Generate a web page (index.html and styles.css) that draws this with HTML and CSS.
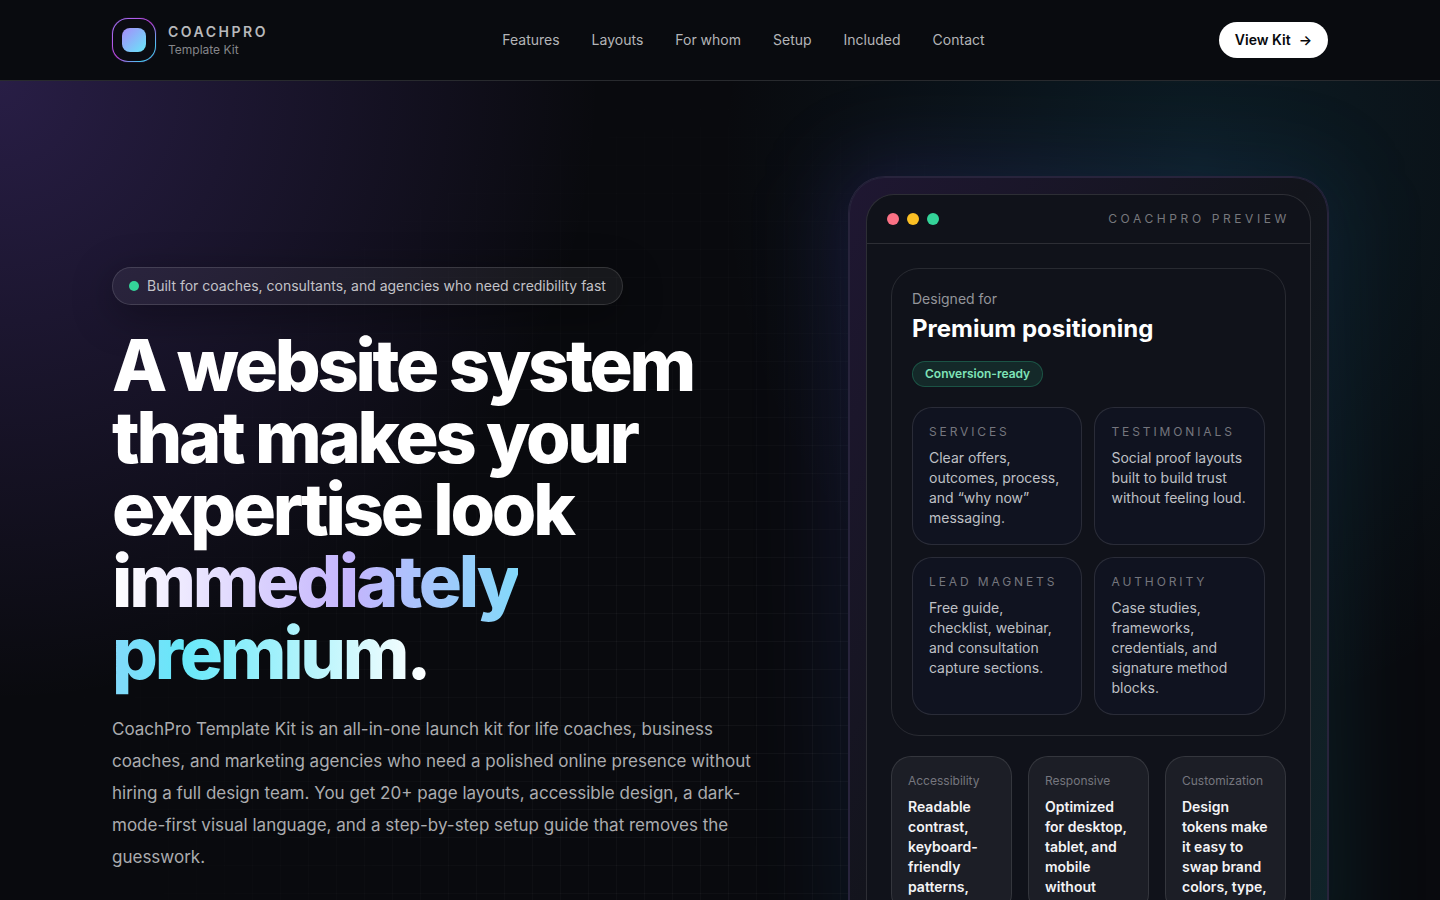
FILE: index.html
```html
<!DOCTYPE html>
<html lang="en">
<head>
  <meta charset="UTF-8">
  <meta name="viewport" content="width=device-width, initial-scale=1.0">
  <title>CoachPro Template Kit</title>
  <link rel="stylesheet" href="styles.css">
</head>
<body>
  <header class="site-header">
    <div class="container header-row">
      <a class="brand" href="#top">
        <span class="brand-mark"><span class="brand-core"></span></span>
        <span class="brand-text">
          <span class="brand-name">COACHPRO</span>
          <span class="brand-sub">Template Kit</span>
        </span>
      </a>
      <nav class="main-nav">
        <a href="#features">Features</a>
        <a href="#layouts">Layouts</a>
        <a href="#for-whom">For whom</a>
        <a href="#setup">Setup</a>
        <a href="#included">Included</a>
        <a href="#contact">Contact</a>
      </nav>
      <a class="btn-kit" href="#contact">View Kit <span>→</span></a>
    </div>
  </header>

  <main class="hero" id="top">
    <div class="hero-grid"></div>
    <div class="container hero-row">
      <!-- Intro -->
      <section class="intro">
        <p class="pill"><span class="pill-dot"></span>Built for coaches, consultants, and agencies who need credibility fast</p>
        <h1>A website system that makes your expertise look <span class="gradient-text">immediately premium.</span></h1>
        <p class="lead">CoachPro Template Kit is an all-in-one launch kit for life coaches, business coaches, and marketing agencies who need a polished online presence without hiring a full design team. You get 20+ page layouts, accessible design, a dark-mode-first visual language, and a step-by-step setup guide that removes the guesswork.</p>
      </section>

      <!-- Preview window -->
      <section class="preview">
        <div class="preview-glow"></div>
        <div class="shell">
          <div class="window">
            <div class="window-bar">
              <div class="dots">
                <span class="dot dot-red"></span>
                <span class="dot dot-yellow"></span>
                <span class="dot dot-green"></span>
              </div>
              <span class="window-title">COACHPRO PREVIEW</span>
            </div>
            <div class="window-body">
              <div class="panel">
                <p class="panel-label">Designed for</p>
                <h2>Premium positioning</h2>
                <span class="badge">Conversion-ready</span>
                <div class="tiles">
                  <div class="tile">
                    <h3>SERVICES</h3>
                    <p>Clear offers, outcomes, process, and “why now” messaging.</p>
                  </div>
                  <div class="tile">
                    <h3>TESTIMONIALS</h3>
                    <p>Social proof layouts built to build trust without feeling loud.</p>
                  </div>
                  <div class="tile">
                    <h3>LEAD MAGNETS</h3>
                    <p>Free guide, checklist, webinar, and consultation capture sections.</p>
                  </div>
                  <div class="tile">
                    <h3>AUTHORITY</h3>
                    <p>Case studies, frameworks, credentials, and signature method blocks.</p>
                  </div>
                </div>
              </div>
              <div class="stats">
                <div class="stat">
                  <h3>Accessibility</h3>
                  <p>Readable contrast, keyboard-friendly patterns,</p>
                </div>
                <div class="stat">
                  <h3>Responsive</h3>
                  <p>Optimized for desktop, tablet, and mobile without</p>
                </div>
                <div class="stat">
                  <h3>Customization</h3>
                  <p>Design tokens make it easy to swap brand colors, type,</p>
                </div>
              </div>
            </div>
          </div>
        </div>
      </section>
    </div>
  </main>
</body>
</html>
```
FILE: styles.css
```css
* {
  box-sizing: border-box;
}
body {
  margin: 0;
  font-family: Inter, sans-serif;
  font-size: 14px;
  line-height: 20px;
  color: #fff;
  background-color: #090a0e;
}
h1, h2, h3, p {
  margin: 0;
}
a {
  color: inherit;
  text-decoration: none;
}
.container {
  max-width: 1280px;
  margin: 0 auto;
  padding: 0 32px;
}

/* Header */
.site-header {
  position: sticky;
  top: 0;
  z-index: 10;
  background: #090b0f;
  border-bottom: 1px solid rgba(255, 255, 255, 0.13);
}
.header-row {
  display: flex;
  align-items: center;
  justify-content: space-between;
  height: 80px;
}
.brand {
  display: flex;
  align-items: center;
  gap: 12px;
}
.brand-mark {
  display: flex;
  align-items: center;
  justify-content: center;
  width: 44px;
  height: 44px;
  border: 1px solid transparent;
  border-radius: 16px;
  background: linear-gradient(#0b0c12, #0b0c12) padding-box,
    linear-gradient(135deg, #9b7cf8, #c044e0 50%, #4cc4f0 80%) border-box;
  box-shadow: 0 0 1px #a03cd0;
}
.brand-core {
  width: 24px;
  height: 24px;
  border-radius: 8px;
  background: linear-gradient(135deg, #a78bfa, #67e8f9);
}
.brand-text {
  display: flex;
  flex-direction: column;
}
.brand-name {
  font-weight: 600;
  letter-spacing: 0.18em;
  color: #b8b9bc;
}
.brand-sub {
  font-size: 12px;
  line-height: 16px;
  color: #85868a;
}
.main-nav {
  display: flex;
  gap: 32px;
  color: #b4b5b8;
}
.btn-kit {
  display: flex;
  gap: 8px;
  padding: 8px 16px;
  border-radius: 18px;
  font-weight: 600;
  color: #07080b;
  background: #fff;
}

/* Hero */
.hero {
  position: relative;
  overflow: hidden;
  background:
    radial-gradient(600px 620px at 0 0, rgba(139, 92, 246, 0.24), transparent),
    radial-gradient(480px 560px at 1200px 80px, rgba(34, 160, 200, 0.12), transparent);
}
.hero-grid {
  position: absolute;
  inset: 0;
  background-image:
    linear-gradient(to right, rgba(255, 255, 255, 0.04) 1px, transparent 1px),
    linear-gradient(to bottom, rgba(255, 255, 255, 0.04) 1px, transparent 1px);
  background-size: 28px 28px;
  -webkit-mask-image: radial-gradient(circle at 50% 65%, #000, transparent 72%);
  mask-image: radial-gradient(circle at 50% 65%, #000, transparent 72%);
}
.hero-row {
  position: relative;
  display: grid;
  grid-template-columns: 1.405fr 1fr;
  gap: 64px;
  padding-top: 96px;
  padding-bottom: 96px;
}
.intro {
  padding-top: 90px;
}
.pill {
  display: inline-flex;
  align-items: center;
  gap: 8px;
  padding: 8px 16px;
  border: 1px solid rgba(255, 255, 255, 0.13);
  border-radius: 19px;
  color: #c3c3c8;
  background: rgba(255, 255, 255, 0.06);
  box-shadow: 0 10px 40px rgba(0, 0, 0, 0.35);
}
.pill-dot {
  width: 10px;
  height: 10px;
  border-radius: 50%;
  background: #34d399;
}
h1 {
  margin-top: 24px;
  font-size: 72px;
  line-height: 72px;
  font-weight: 800;
  letter-spacing: -0.045em;
}
.gradient-text {
  color: transparent;
  background: linear-gradient(90deg, #fff, #c4b5fd 33%, #67e8f9 66%, #fff);
  -webkit-background-clip: text;
  background-clip: text;
}
.lead {
  max-width: 672px;
  margin-top: 24px;
  font-size: 17px;
  line-height: 32px;
  color: #abacaf;
}

/* Preview */
.preview {
  position: relative;
}
.preview-glow {
  position: absolute;
  inset: -16px;
  border-radius: 48px;
  background: linear-gradient(120deg, rgba(90, 70, 220, 0.18), rgba(30, 110, 180, 0.1) 50%, rgba(16, 120, 130, 0.18));
  filter: blur(40px);
}
.shell {
  position: relative;
  padding: 16px;
  border: 1px solid #28243c;
  border-radius: 36px;
  background: linear-gradient(120deg, #1f1732, #12141b 50%, #10242a);
  box-shadow: 0 0 0 1px #28243c;
}
.window {
  border: 1px solid rgba(255, 255, 255, 0.12);
  border-radius: 28px;
  background: #10121a;
}
.window-bar {
  display: flex;
  align-items: center;
  justify-content: space-between;
  padding: 14px 20px;
  border-bottom: 1px solid rgba(255, 255, 255, 0.12);
}
.dots {
  display: flex;
  gap: 8px;
}
.dot {
  width: 12px;
  height: 12px;
  border-radius: 50%;
}
.dot-red {
  background: #fb7185;
}
.dot-yellow {
  background: #fbbf24;
}
.dot-green {
  background: #34d399;
}
.window-title {
  font-size: 12px;
  letter-spacing: 0.3em;
  color: #77787d;
}
.window-body {
  display: grid;
  gap: 20px;
  padding: 24px;
}
.panel {
  padding: 20px;
  border: 1px solid rgba(255, 255, 255, 0.1);
  border-radius: 28px;
}
.panel-label {
  color: #94959a;
}
h2 {
  margin: 4px 0 16px;
  font-size: 24px;
  line-height: 32px;
  font-weight: 700;
}
.badge {
  display: block;
  width: fit-content;
  padding: 4px 12px;
  border: 1px solid rgba(52, 211, 153, 0.25);
  border-radius: 13px;
  font-size: 12px;
  line-height: 16px;
  font-weight: 600;
  color: #7fe3b8;
  background: rgba(52, 211, 153, 0.12);
}
.tiles {
  display: grid;
  grid-template-columns: 1fr 1fr;
  gap: 12px;
  margin-top: 20px;
}
.tile {
  padding: 16px;
  border: 1px solid rgba(255, 255, 255, 0.11);
  border-radius: 20px;
  color: #bfc0c5;
  background: #101320;
}
h3 {
  margin-bottom: 8px;
  font-size: 12px;
  line-height: 16px;
  font-weight: 400;
  color: #75767e;
}
.tile h3 {
  letter-spacing: 0.24em;
}
.stats {
  display: grid;
  grid-template-columns: repeat(3, 1fr);
  gap: 16px;
}
.stat {
  min-width: 0;
  padding: 16px;
  border: 1px solid rgba(255, 255, 255, 0.11);
  border-radius: 20px;
  font-weight: 600;
  color: #f3f3f5;
  background: #1c1e26;
}
```
